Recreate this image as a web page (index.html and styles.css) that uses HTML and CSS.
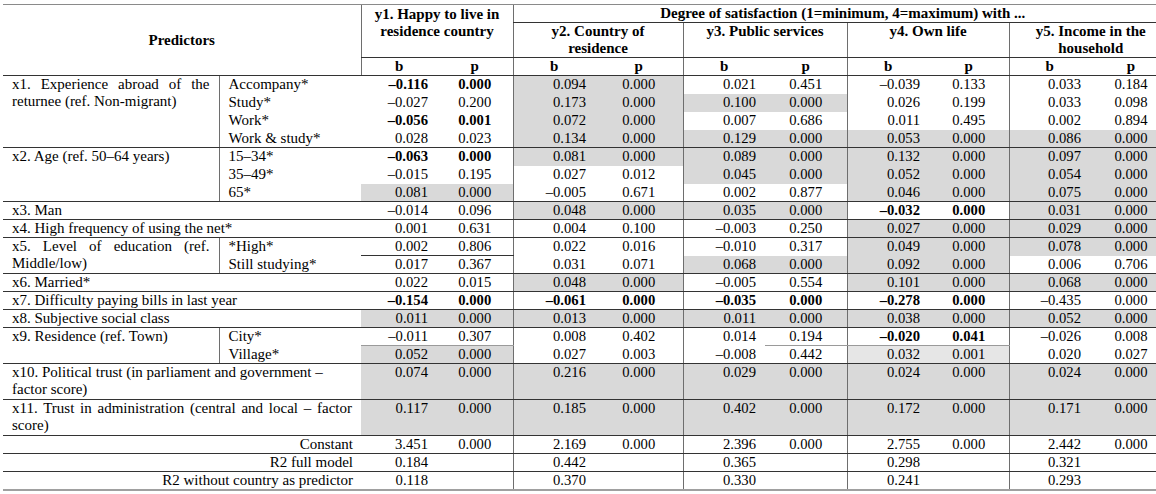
FILE: index.html
```html
<!DOCTYPE html>
<html>
<head>
<meta charset="utf-8">
<title>Regression results</title>
<link rel="stylesheet" href="styles.css">
</head>
<body>
<div class="wrap">
<table class="reg">
<colgroup>
<col class="c-lab"><col class="c-sub">
<col class="c-y1"><col class="c-y1">
<col class="c-y2b vl"><col class="c-y2p">
<col class="c-y3 vl"><col class="c-y3">
<col class="c-y4b vl"><col class="c-y4p">
<col class="c-y5b vl"><col class="c-y5p">
</colgroup>
<thead>
<tr class="h1">
<th class="pred" colspan="2" rowspan="3">Predictors</th>
<th class="y1h" colspan="2" rowspan="2">y1. Happy to live in<br>residence country</th>
<th class="deg" colspan="10">Degree of satisfaction (1=minimum, 4=maximum) with ...</th>
</tr>
<tr class="h2">
<th colspan="2">y2. Country of<br>residence</th>
<th colspan="2">y3. Public services</th>
<th colspan="2">y4. Own life</th>
<th colspan="2">y5. Income in the<br>household</th>
</tr>
<tr class="h3">
<th class="y1b">b</th><th>p</th>
<th>b</th><th>p</th>
<th>b</th><th>p</th>
<th>b</th><th>p</th>
<th>b</th><th>p</th>
</tr>
</thead>
<tbody>
<tr class="top">
<td class="lab" rowspan="4"><span class="jl">x1. Experience abroad of the</span>returnee (ref. Non-migrant)</td>
<td class="sub">Accompany*</td>
<td class="b bd">–0.116</td><td class="p bd">0.000</td>
<td class="b g">0.094</td><td class="p g">0.000</td>
<td class="b">0.021</td><td class="p">0.451</td>
<td class="b">–0.039</td><td class="p">0.133</td>
<td class="b">0.033</td><td class="p">0.184</td>
</tr>
<tr>
<td class="sub">Study*</td>
<td class="b">–0.027</td><td class="p">0.200</td>
<td class="b g">0.173</td><td class="p g">0.000</td>
<td class="b g">0.100</td><td class="p g">0.000</td>
<td class="b">0.026</td><td class="p">0.199</td>
<td class="b">0.033</td><td class="p">0.098</td>
</tr>
<tr>
<td class="sub">Work*</td>
<td class="b bd">–0.056</td><td class="p bd">0.001</td>
<td class="b g">0.072</td><td class="p g">0.000</td>
<td class="b">0.007</td><td class="p">0.686</td>
<td class="b">0.011</td><td class="p">0.495</td>
<td class="b">0.002</td><td class="p">0.894</td>
</tr>
<tr>
<td class="sub">Work &amp; study*</td>
<td class="b">0.028</td><td class="p">0.023</td>
<td class="b g">0.134</td><td class="p g">0.000</td>
<td class="b g">0.129</td><td class="p g">0.000</td>
<td class="b g">0.053</td><td class="p g">0.000</td>
<td class="b g">0.086</td><td class="p g">0.000</td>
</tr>
<tr class="top">
<td class="lab" rowspan="3">x2. Age (ref. 50–64 years)</td>
<td class="sub">15–34*</td>
<td class="b bd">–0.063</td><td class="p bd">0.000</td>
<td class="b g">0.081</td><td class="p g">0.000</td>
<td class="b g">0.089</td><td class="p g">0.000</td>
<td class="b g">0.132</td><td class="p g">0.000</td>
<td class="b g">0.097</td><td class="p g">0.000</td>
</tr>
<tr>
<td class="sub">35–49*</td>
<td class="b">–0.015</td><td class="p">0.195</td>
<td class="b">0.027</td><td class="p">0.012</td>
<td class="b g">0.045</td><td class="p g">0.000</td>
<td class="b g">0.052</td><td class="p g">0.000</td>
<td class="b g">0.054</td><td class="p g">0.000</td>
</tr>
<tr>
<td class="sub">65*</td>
<td class="b g">0.081</td><td class="p g">0.000</td>
<td class="b">–0.005</td><td class="p">0.671</td>
<td class="b">0.002</td><td class="p">0.877</td>
<td class="b g">0.046</td><td class="p g">0.000</td>
<td class="b g">0.075</td><td class="p g">0.000</td>
</tr>
<tr class="top">
<td class="lab" colspan="2">x3. Man</td>
<td class="b">–0.014</td><td class="p">0.096</td>
<td class="b g">0.048</td><td class="p g">0.000</td>
<td class="b g">0.035</td><td class="p g">0.000</td>
<td class="b bd">–0.032</td><td class="p bd">0.000</td>
<td class="b g">0.031</td><td class="p g">0.000</td>
</tr>
<tr class="top">
<td class="lab" colspan="2">x4. High frequency of using the net*</td>
<td class="b">0.001</td><td class="p">0.631</td>
<td class="b">0.004</td><td class="p">0.100</td>
<td class="b">–0.003</td><td class="p">0.250</td>
<td class="b g">0.027</td><td class="p g">0.000</td>
<td class="b g">0.029</td><td class="p g">0.000</td>
</tr>
<tr class="top">
<td class="lab" rowspan="2"><span class="jl">x5. Level of education (ref.</span>Middle/low)</td>
<td class="sub">*High*</td>
<td class="b">0.002</td><td class="p">0.806</td>
<td class="b">0.022</td><td class="p">0.016</td>
<td class="b">–0.010</td><td class="p">0.317</td>
<td class="b g">0.049</td><td class="p g">0.000</td>
<td class="b g">0.078</td><td class="p g">0.000</td>
</tr>
<tr>
<td class="sub">Still studying*</td>
<td class="b ln">0.017</td><td class="p ln">0.367</td>
<td class="b">0.031</td><td class="p">0.071</td>
<td class="b g">0.068</td><td class="p g">0.000</td>
<td class="b g">0.092</td><td class="p g">0.000</td>
<td class="b">0.006</td><td class="p">0.706</td>
</tr>
<tr class="top">
<td class="lab" colspan="2">x6. Married*</td>
<td class="b">0.022</td><td class="p">0.015</td>
<td class="b g">0.048</td><td class="p g">0.000</td>
<td class="b">–0.005</td><td class="p">0.554</td>
<td class="b g">0.101</td><td class="p g">0.000</td>
<td class="b g">0.068</td><td class="p g">0.000</td>
</tr>
<tr class="top">
<td class="lab" colspan="2">x7. Difficulty paying bills in last year</td>
<td class="b bd">–0.154</td><td class="p bd">0.000</td>
<td class="b bd">–0.061</td><td class="p bd">0.000</td>
<td class="b bd">–0.035</td><td class="p bd">0.000</td>
<td class="b bd">–0.278</td><td class="p bd">0.000</td>
<td class="b">–0.435</td><td class="p">0.000</td>
</tr>
<tr class="top">
<td class="lab" colspan="2">x8. Subjective social class</td>
<td class="b g">0.011</td><td class="p g">0.000</td>
<td class="b g">0.013</td><td class="p g">0.000</td>
<td class="b g">0.011</td><td class="p g">0.000</td>
<td class="b g">0.038</td><td class="p g">0.000</td>
<td class="b g">0.052</td><td class="p g">0.000</td>
</tr>
<tr class="top">
<td class="lab" rowspan="2">x9. Residence (ref. Town)</td>
<td class="sub">City*</td>
<td class="b">–0.011</td><td class="p">0.307</td>
<td class="b">0.008</td><td class="p">0.402</td>
<td class="b">0.014</td><td class="p">0.194</td>
<td class="b bd">–0.020</td><td class="p bd">0.041</td>
<td class="b">–0.026</td><td class="p">0.008</td>
</tr>
<tr>
<td class="sub">Village*</td>
<td class="b g lt">0.052</td><td class="p g lt">0.000</td>
<td class="b">0.027</td><td class="p">0.003</td>
<td class="b">–0.008</td><td class="p lt">0.442</td>
<td class="b l lt">0.032</td><td class="p l lt">0.001</td>
<td class="b">0.020</td><td class="p">0.027</td>
</tr>
<tr class="top two">
<td class="lab" colspan="2">x10. Political trust (in parliament and government –<br>factor score)</td>
<td class="b g">0.074</td><td class="p g">0.000</td>
<td class="b g">0.216</td><td class="p g">0.000</td>
<td class="b g">0.029</td><td class="p g">0.000</td>
<td class="b g">0.024</td><td class="p g">0.000</td>
<td class="b g">0.024</td><td class="p g">0.000</td>
</tr>
<tr class="top two">
<td class="lab" colspan="2"><span class="jl">x11. Trust in administration (central and local – factor</span>score)</td>
<td class="b g">0.117</td><td class="p g">0.000</td>
<td class="b g">0.185</td><td class="p g">0.000</td>
<td class="b g">0.402</td><td class="p g">0.000</td>
<td class="b g">0.172</td><td class="p g">0.000</td>
<td class="b g">0.171</td><td class="p g">0.000</td>
</tr>
<tr class="top">
<td class="lab right" colspan="2">Constant</td>
<td class="b">3.451</td><td class="p">0.000</td>
<td class="b">2.169</td><td class="p">0.000</td>
<td class="b">2.396</td><td class="p">0.000</td>
<td class="b">2.755</td><td class="p">0.000</td>
<td class="b">2.442</td><td class="p">0.000</td>
</tr>
<tr class="top">
<td class="lab right" colspan="2">R2 full model</td>
<td class="b">0.184</td><td class="p"></td>
<td class="b">0.442</td><td class="p"></td>
<td class="b">0.365</td><td class="p"></td>
<td class="b">0.298</td><td class="p"></td>
<td class="b">0.321</td><td class="p"></td>
</tr>
<tr class="top last">
<td class="lab right" colspan="2">R2 without country as predictor</td>
<td class="b">0.118</td><td class="p"></td>
<td class="b">0.370</td><td class="p"></td>
<td class="b">0.330</td><td class="p"></td>
<td class="b">0.241</td><td class="p"></td>
<td class="b">0.293</td><td class="p"></td>
</tr>
</tbody>
</table>
</div>
</body>
</html>
```

FILE: styles.css
```css
html, body {
  margin: 0;
  padding: 0;
  overflow: hidden;
  background: #ffffff;
}

.wrap {
  padding: 4px 0 0 3px;
  width: 1200px;
}

table.reg {
  border-collapse: collapse;
  table-layout: fixed;
  width: 1169px;
  font-family: "Liberation Serif", "Times New Roman", serif;
  font-size: 14.67px;
  line-height: 17px;
  color: #000;
}

col.c-lab { width: 216px; }
col.c-sub { width: 142px; border-left: 1px solid #6e6e6e; }
col.c-y1 { width: 76px; }
col.c-y2b { width: 82px; }
col.c-y2p { width: 88px; }
col.c-y3 { width: 82px; }
col.c-y4b { width: 82px; }
col.c-y4p { width: 80px; }
col.c-y5b { width: 81px; }
col.c-y5p { width: 82px; }
col.vl { border-left: 1px solid #6e6e6e; }

tr { height: 18px; }

th {
  font-size: 15px;
  font-weight: bold;
  padding: 0 4px;
  text-align: center;
  vertical-align: top;
}

tr.h1 th { border-top: 1px solid #8a8a8a; }
tr.h2 { height: 35px; }
tr.h2 th { border-bottom: 1px solid #333; }
th.deg { border-bottom: 1px solid #333; border-left: 1px solid #6e6e6e; }
th.y1h { border-left: 1px solid #6e6e6e; border-bottom: 1px solid #333; padding-top: 1px; }
th.pred { vertical-align: middle; border-bottom: 1px solid #333; }
tr.h3 th { border-bottom: 1px solid #333; vertical-align: middle; }
th.y1b { border-left: 1px solid #6e6e6e; }

td {
  padding: 0;
  vertical-align: middle;
  white-space: nowrap;
}

td.lab {
  font-size: 15px;
  padding: 0 9px;
  text-align: left;
  vertical-align: top;
  white-space: normal;
}

td.lab.right {
  text-align: right;
  padding-right: 8px;
  vertical-align: middle;
}

.jl {
  display: block;
  text-align: justify;
  text-align-last: justify;
}

td.sub {
  font-size: 15px;
  padding: 0 9px;
  text-align: left;
}

td.b {
  text-align: right;
  padding-right: 9px;
}

td.p {
  text-align: center;
}

tr.two { height: 36px; }
tr.two td { vertical-align: top; }

.bd { font-weight: bold; }

.g { background: #d9d9d9; }
.l { background: #e6e6e6; }

tr.top td { border-top: 1px solid #333; }
tr.last td { border-bottom: 2px solid #a0a0a0; }

td.ln { border-top: 1px solid #333; }
td.lt { border-top: 1px solid #9a9a9a; }
```
